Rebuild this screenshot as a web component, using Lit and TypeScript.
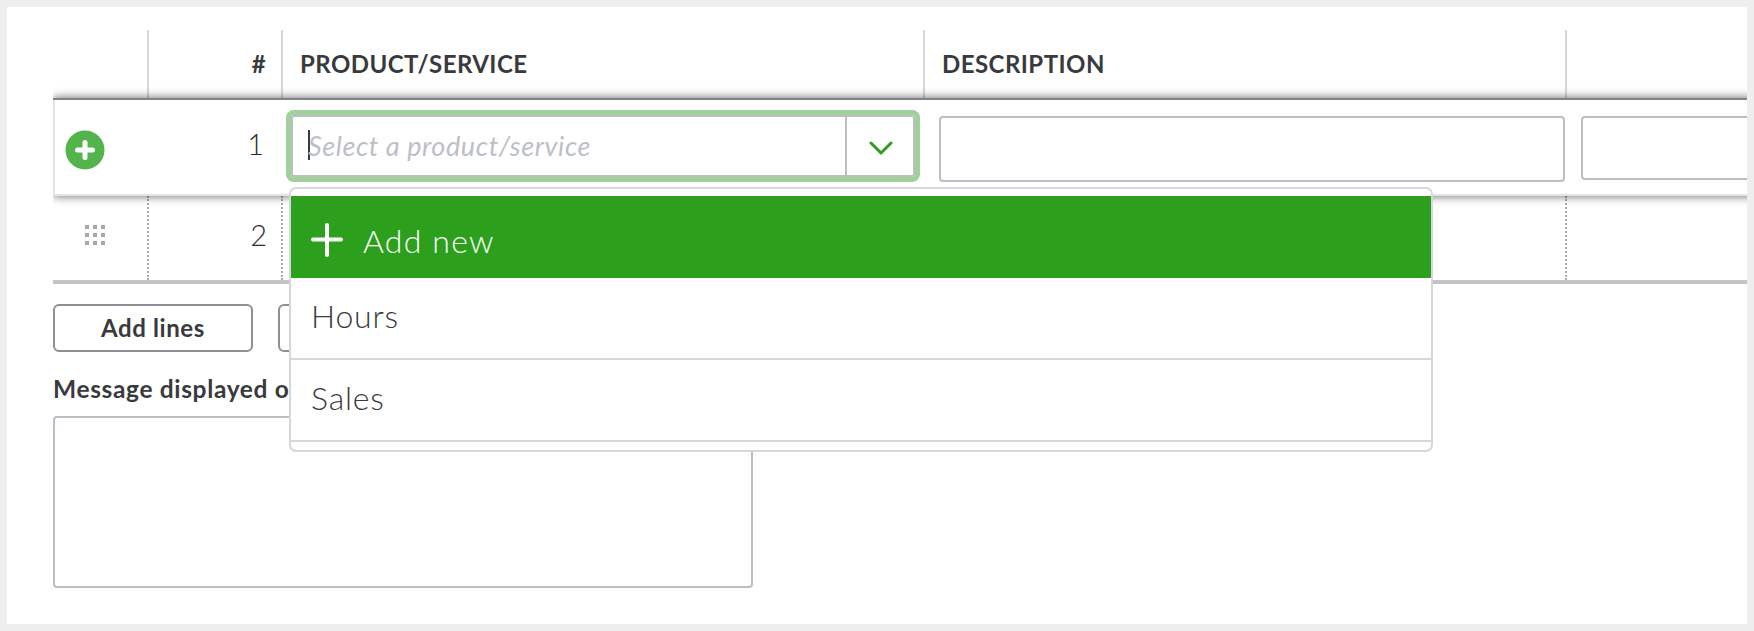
import { LitElement, html, css } from "lit";
import { customElement } from "lit/decorators.js";

@customElement("app-root")
export class AppRoot extends LitElement {
  static styles = css`
    :host { display: block; background: #eeeeee; padding: 7px; height: 631px; box-sizing: border-box; font-family: Lato, "Open Sans", sans-serif; color: #393a3d; }
    .panel { position: relative; background: #fff; height: 617px; box-sizing: border-box; padding: 23px 0 0 46px; overflow: hidden; }
    .grid { display: grid; grid-template-columns: 96px 134px 642px 642px 400px; width: 1914px; }
    .head { height: 68px; align-items: center; }
    .hcell { height: 68px; box-sizing: border-box; border-right: 2px solid #d6d7dc; display: flex; align-items: center; padding: 0 0 2px 17px; font-size: 24px; font-weight: 700; letter-spacing: 0.45px; }
    .hcell.num { justify-content: flex-end; padding: 0 15px 2px 0; }
    .hcell.last { border-right: 0; }
    .row1 { position: relative; z-index: 1; height: 98px; box-sizing: border-box; background: #fff; border-top: 2px solid #818388; border-bottom: 2px solid #e3e4e8; box-shadow: inset 2px 0 0 #e3e4e8, 0 0 9px rgba(0,0,0,.62); clip-path: inset(-12px 0 -12px 0); }
    .cell { box-sizing: border-box; }
    .plus-cell { display: flex; padding: 30px 0 0 12px; }
    .plus-cell svg { display: block; }
    .numtext { font-size: 29px; font-weight: 300; text-align: right; color: #2b2c2f; }
    .row1 .numtext { padding: 28px 19px 0 0; line-height: 32px; }
    .sel-cell { padding: 15px 0 0 8px; }
    .select { display: flex; width: 624px; height: 62px; box-sizing: border-box; border: 2px solid #babec5; border-radius: 3px; box-shadow: 0 0 0 5px #a1d19b; }
    .sel-input { flex: 1; display: flex; align-items: center; padding: 0 0 2px 15px; border-right: 2px solid #babec5; font-size: 27px; font-style: italic; font-weight: 400; color: #bcbfc7; letter-spacing: 0.6px; }
    .caret { width: 2px; height: 30px; background: #393a3d; flex: none; margin: -1px -2px 0 0; }
    .arrow { width: 66px; display: flex; align-items: center; justify-content: center; padding: 4px 0 0 2px; box-sizing: border-box; }
    .input-cell { padding: 16px 0 0 14px; }
    .input { box-sizing: border-box; width: 626px; height: 66px; border: 2px solid #babec5; border-radius: 4px; }
    .input.last { height: 64px; width: 400px; }
    .row2 { height: 84px; }
    .row2 .c { height: 84px; box-sizing: border-box; border-right: 2px dotted #ababab; }
    .row2 .drag { display: flex; align-items: center; justify-content: flex-start; padding: 0 0 6px 32px; }
    .row2 .numtext { padding: 23px 14px 0 0; line-height: 32px; }
    .rule { height: 4px; background: #c4c4c4; width: 1700px; }
    .actions { display: flex; gap: 25px; margin-top: 20px; }
    .btn { box-sizing: border-box; height: 48px; width: 200px; padding: 0 0 2px; border: 2px solid #8d9096; border-radius: 6px; background: #fff; display: flex; align-items: center; justify-content: center; font-size: 24px; letter-spacing: 0.6px; font-weight: 700; color: #393a3d; font-family: inherit; }
    .label { margin-top: 23px; font-size: 24.5px; letter-spacing: 0.65px; font-weight: 700; line-height: 28px; white-space: nowrap; }
    .msg { margin-top: 13px; box-sizing: border-box; width: 700px; height: 172px; border: 2px solid #babec5; border-radius: 4px; }
    .menu { position: absolute; z-index: 2; left: 282px; top: 180px; width: 1144px; height: 265px; box-sizing: border-box; background: #fff; border: 2px solid #d4d7dc; border-radius: 7px; padding-top: 7px; overflow: hidden; }
    .addnew { box-sizing: border-box; height: 82px; padding: 6px 0 0 20px; background: #2ca01c; color: #fff; display: flex; align-items: center; gap: 20px; font-size: 32px; font-weight: 300; letter-spacing: 1.2px; }
    .item { box-sizing: border-box; height: 82px; border-bottom: 2px solid #d4d7dc; padding: 20px 0 0 20px; font-size: 32px; line-height: 36px; font-weight: 300; letter-spacing: 0.8px; }
  `;

  render() {
    return html`
      <div class="panel">
        <div class="grid head">
          <div class="hcell"></div>
          <div class="hcell num">#</div>
          <div class="hcell">PRODUCT/SERVICE</div>
          <div class="hcell">DESCRIPTION</div>
          <div class="hcell last"></div>
        </div>
        <div class="grid row1">
          <div class="cell plus-cell">
            <svg width="40" height="40" viewBox="0 0 40 40">
              <circle cx="20" cy="20" r="19.5" fill="#53b44c"></circle>
              <path d="M20 12.5v15M12.5 20h15" stroke="#fff" stroke-width="5" stroke-linecap="round"></path>
            </svg>
          </div>
          <div class="cell numtext">1</div>
          <div class="cell sel-cell">
            <div class="select">
              <div class="sel-input"><span class="caret"></span><span>Select a product/service</span></div>
              <div class="arrow">
                <svg width="24" height="15" viewBox="0 0 24 15">
                  <path d="M2 2l10 10L22 2" fill="none" stroke="#2ca01c" stroke-width="3" stroke-linecap="round" stroke-linejoin="round"></path>
                </svg>
              </div>
            </div>
          </div>
          <div class="cell input-cell"><div class="input"></div></div>
          <div class="cell input-cell"><div class="input last"></div></div>
        </div>
        <div class="grid row2">
          <div class="c drag">
            <svg width="20" height="20" viewBox="0 0 20 20" fill="#a8a8a8">
              <rect x="0" y="0" width="4" height="4"></rect><rect x="8" y="0" width="4" height="4"></rect><rect x="16" y="0" width="4" height="4"></rect>
              <rect x="0" y="8" width="4" height="4"></rect><rect x="8" y="8" width="4" height="4"></rect><rect x="16" y="8" width="4" height="4"></rect>
              <rect x="0" y="16" width="4" height="4"></rect><rect x="8" y="16" width="4" height="4"></rect><rect x="16" y="16" width="4" height="4"></rect>
            </svg>
          </div>
          <div class="c numtext">2</div>
          <div class="c"></div>
          <div class="c"></div>
          <div></div>
        </div>
        <div class="rule"></div>
        <div class="actions">
          <button class="btn">Add lines</button>
          <button class="btn"></button>
        </div>
        <div class="label">Message displayed o</div>
        <div class="msg"></div>
        <div class="menu">
          <div class="addnew">
            <svg width="32" height="34" viewBox="0 0 32 34">
              <path d="M16 2v30M2 16.5h28" stroke="#fff" stroke-width="4" stroke-linecap="round"></path>
            </svg>
            <span>Add new</span>
          </div>
          <div class="item">Hours</div>
          <div class="item">Sales</div>
        </div>
      </div>
    `;
  }
}
